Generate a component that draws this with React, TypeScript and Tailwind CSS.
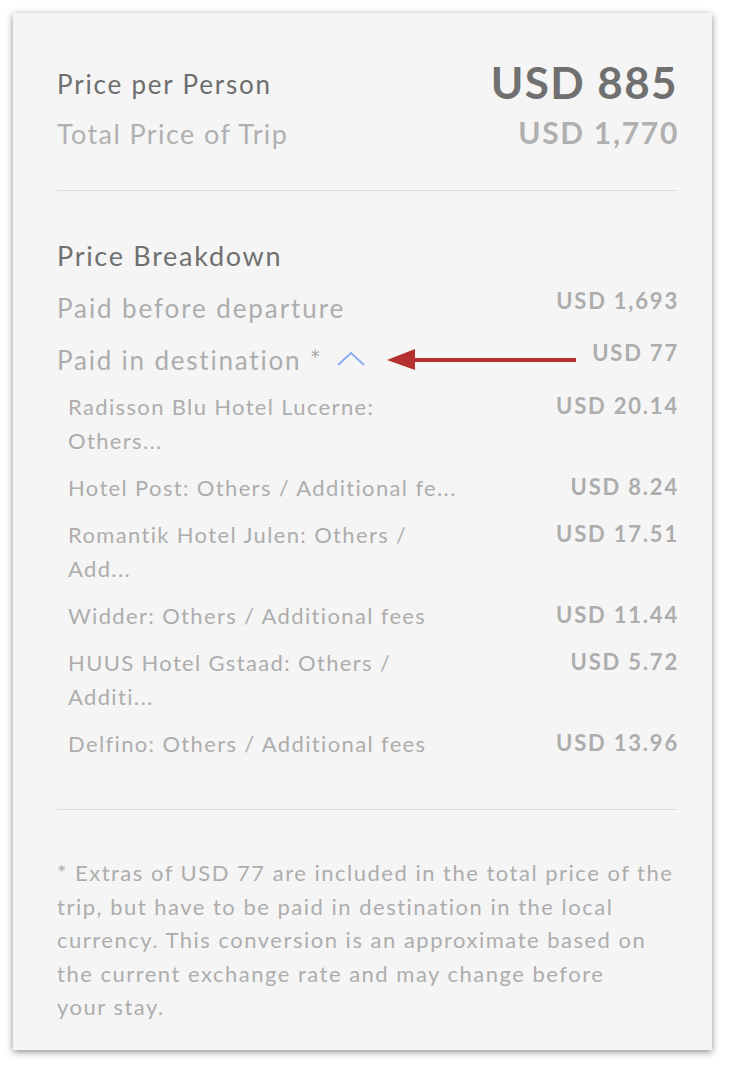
import React from "react";

const items: { lines: string[]; amount: string }[] = [
  { lines: ["Radisson Blu Hotel Lucerne:", "Others..."], amount: "USD 20.14" },
  { lines: ["Hotel Post: Others / Additional fe..."], amount: "USD 8.24" },
  { lines: ["Romantik Hotel Julen: Others /", "Add..."], amount: "USD 17.51" },
  { lines: ["Widder: Others / Additional fees"], amount: "USD 11.44" },
  { lines: ["HUUS Hotel Gstaad: Others /", "Additi..."], amount: "USD 5.72" },
  { lines: ["Delfino: Others / Additional fees"], amount: "USD 13.96" },
];

const footLines = [
  "* Extras of USD 77 are included in the total price of the",
  "trip, but have to be paid in destination in the local",
  "currency. This conversion is an approximate based on",
  "the current exchange rate and may change before",
  "your stay.",
];

export default function App() {
  return (
    <div className="w-[736px] h-[1070px] bg-white pt-[13px] pl-[13px] [font-family:Lato,'Noto_Sans',sans-serif]">
      <div className="w-[699px] h-[1037px] bg-[#f5f5f5] shadow-[0_2px_7px_rgba(0,0,0,0.45)] pt-[43px] pl-[44px] pr-[35px]">
        {/* Header */}
        <div className="flex justify-between items-center h-[52px]">
          <span className="text-[26px] leading-[32px] tracking-[1.8px] text-[#6e6e6e] mt-[4px]">Price per Person</span>
          <span className="text-[44px] leading-[52px] tracking-[1.4px] mr-[-1px] font-bold text-[#707070]">USD 885</span>
        </div>
        <div className="flex justify-between items-center h-[36px] mt-[6px]">
          <span className="text-[27px] leading-[34px] tracking-[1.4px] text-[#b0b0b0] mt-[4px]">Total Price of Trip</span>
          <span className="text-[30px] leading-[36px] tracking-[1.7px] mr-[-2px] font-bold text-[#b0b0b0]">USD 1,770</span>
        </div>
        <div className="h-px bg-[#dcdcdc] mt-[40px]" />

        {/* Breakdown */}
        <div className="mt-[46px] text-[27px] leading-[38px] tracking-[1.7px] text-[#707070]">Price Breakdown</div>
        <div className="flex justify-between items-start mt-[14px]">
          <span className="text-[26px] leading-[38px] tracking-[1.9px] text-[#adadad]">Paid before departure</span>
          <span className="text-[22px] leading-[24px] tracking-[1.8px] mr-[-2px] font-bold text-[#adadad]">USD 1,693</span>
        </div>
        <div className="relative flex justify-between items-start mt-[14px]">
          <span className="flex items-center text-[26px] leading-[38px] tracking-[1.8px] text-[#adadad]">
            Paid in destination *
            <svg width="30" height="16" viewBox="0 0 30 16" className="ml-[13px] mb-[2px]" fill="none">
              <polyline points="2,14 15,2 28,14" stroke="#88aaf6" strokeWidth="1.8" />
            </svg>
          </span>
          <span className="text-[22px] leading-[24px] tracking-[1.8px] mr-[-2px] font-bold text-[#adadad]">USD 77</span>
          <svg
            className="absolute left-[330px] top-[6px]"
            width="192"
            height="24"
            viewBox="0 0 192 24"
          >
            <polygon points="0,13 28,2 28,23" fill="#b5302e" />
            <rect x="26" y="11" width="163" height="4" fill="#b5302e" />
          </svg>
        </div>

        <div className="mt-[11px] flex flex-col gap-[13px] pl-[11px]">
          {items.map((it) => (
            <div key={it.amount} className="flex justify-between items-start">
              <div className="text-[22px] leading-[34px] tracking-[1.35px] text-[#adadad]">
                {it.lines.map((l) => (
                  <div key={l} className="whitespace-nowrap">{l}</div>
                ))}
              </div>
              <span className="text-[22px] leading-[32px] tracking-[1.8px] mr-[-2px] font-bold text-[#adadad]">{it.amount}</span>
            </div>
          ))}
        </div>

        <div className="h-px bg-[#dcdcdc] mt-[48px]" />

        <div className="mt-[46px] text-[22px] leading-[33.5px] tracking-[1.5px] text-[#adadad]">
          {footLines.map((l) => (
            <div key={l} className="whitespace-nowrap">{l}</div>
          ))}
        </div>
      </div>
    </div>
  );
}
